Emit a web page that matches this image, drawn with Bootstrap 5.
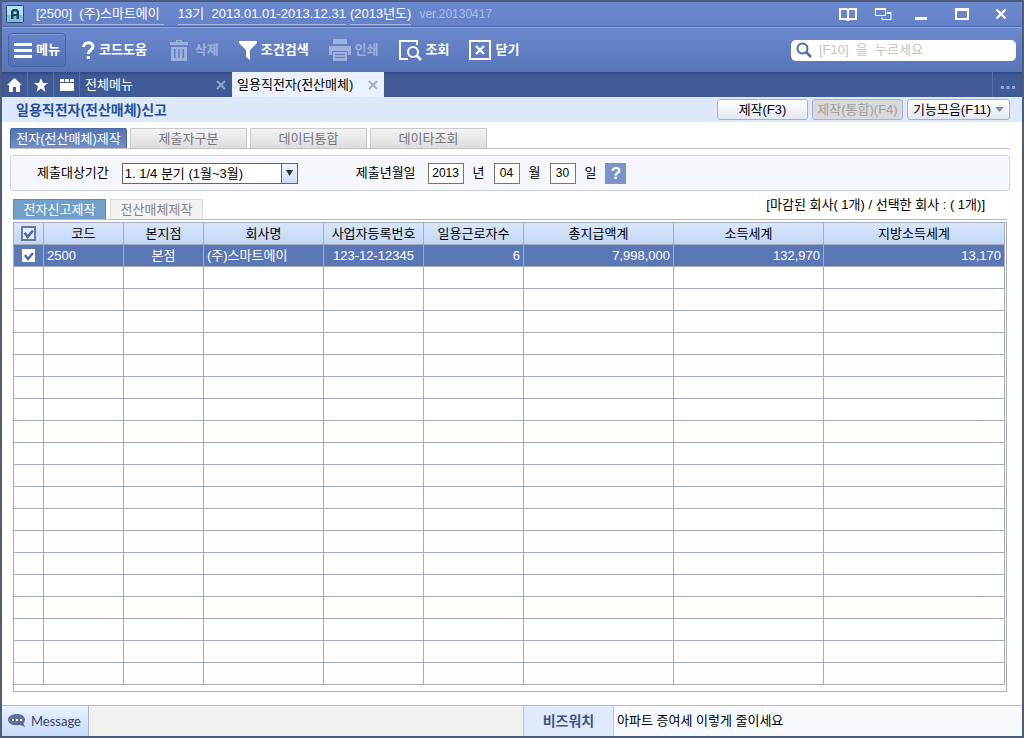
<!DOCTYPE html>
<html lang="ko">
<head>
<meta charset="utf-8">
<meta name="viewport" content="width=device-width, initial-scale=1">
<title>일용직전자(전산매체)신고</title>
<link rel="stylesheet" href="https://cdn.jsdelivr.net/npm/bootstrap@5.3.0/dist/css/bootstrap.min.css">
<style>
body{font:13px/20px "Liberation Sans","Noto Sans CJK KR",sans-serif;color:#000;background:#fff}
button,input,select{font:inherit;color:inherit}
a{color:inherit;text-decoration:none}
svg{display:block;flex:none}
.app-window{border:2px solid #4e5c7c}
.title-bar{height:25px;padding:0 15px 0 4px;background:linear-gradient(#6d89cf,#6480c6);border-bottom:1px solid #4d68ad;color:#fff}
.title-info{border-bottom:1px solid #a9b9e6;line-height:20px;white-space:pre}
.title-term{margin-left:14px}
.app-version{color:#afbde6;font-size:12px}
.icon-btn{border:0;padding:0;background:none;color:#fff;display:flex}
.win-controls{gap:18px}
.tool-bar{height:45px;padding:0 6px;background:linear-gradient(#6c88cd,#5875b9);border-top:1px solid #8fa5dd;color:#fff;font-weight:700}
.tool-list{gap:20px;margin-left:15px}
.tool-btn{border:0;padding:0;background:none;color:#fff;display:flex;align-items:center;gap:4px;white-space:nowrap;font-weight:700}
.tool-btn:disabled{color:#9db0de}
.menu-btn{height:34px;width:58px;padding:0 5px;border:1px solid #4763a8;border-radius:4px;background:linear-gradient(#6682c8,#5571b5);box-shadow:inset 0 1px #8199d6}
.search-box{width:225px;height:21px;padding:0 5px;gap:7px;border-radius:5px;background:#fff}
.search-box input{border:0;outline:0;padding:0;width:100%;min-width:0;height:20px;background:none;color:#333;font-weight:400}
.search-box input::placeholder{color:#c4c4c4;opacity:1}
.page-tabs{height:25px;background:#405a96;box-shadow:inset 0 2px 2px #33497d;color:#fff}
.tab-icon{width:26px;border:0;border-right:1px solid #5870a8;background:none;color:#fff;padding:0;display:flex;align-items:center;justify-content:center}
.page-tab{width:152px;padding:0 6px 0 5px}
.page-tab.is-open{background:#eaf1fc;color:#000}
.page-tab .icon-btn{color:#93a2cb}
.page-tab.is-open .icon-btn{color:#a7b0bd}
.more-btn{width:30px;border:0;border-left:1px solid #5870a8;background:none;padding:6px 0 0;display:flex;align-items:center;justify-content:center;color:#93a2cb}
.page-head{height:25px;padding:0 12px 0 14px;background:#dde9fb}
.page-head h1{font-size:14px;font-weight:700;line-height:20px;color:#1f4fa0}
.act-btn{height:21px;border:1px solid #a9b3c4;border-radius:3px;background:linear-gradient(#fff,#e3e7ef);padding:0;line-height:18px;white-space:nowrap}
.act-btn:disabled{color:#a0a0a0;background:#d9d9d9}
.act-make{width:91px}
.act-more{width:103px}
.main-area{padding:6px 12px 13px 8px}
.step-tabs{gap:3px;border-bottom:1px solid #c3c3c3}
.step-tab{width:117px;height:20px;border:1px solid #c9c9c9;border-bottom:0;border-radius:2px 2px 0 0;background:linear-gradient(#f4f4f4,#dcdcdc);color:#777;padding:0;line-height:17px;white-space:nowrap}
.step-tab.is-on{background:linear-gradient(#5674b0,#7090c6);border-color:#4a68a5;color:#fff}
.filter-box{height:36px;margin-top:6px;padding:0 26px;border:1px solid #c9d4e6;border-radius:3px;background:#f5f7fc}
.period-select{width:176px;height:21px;margin:0 58px 0 13px}
.period-select select{width:100%;height:100%;border:1px solid #666;border-radius:0;background:#fff;appearance:none;padding:0 20px 0 2px;line-height:17px}
.select-arrow{right:1px;top:1px;bottom:1px;width:16px;border-left:1px solid #666;background:linear-gradient(#f0f5fd,#cfdcf2);pointer-events:none}
.date-input{height:21px;border:1px solid #777;background:#fff;padding:0;text-align:center;font-size:12px}
.date-label{margin-right:12px}
.unit-label{margin:0 9px}
.w-year{width:36px}
.w-day{width:26px}
.help-btn{width:21px;height:21px;border:0;padding:0;background:#7b93cb;color:#fff;font-weight:700;font-size:17px;line-height:21px}
.sub-row{margin:7px 3px 2px;border-bottom:1px solid #b9bdc0}
.sub-tab{width:93px;height:20px;border:1px solid #d8d8d8;border-bottom:0;background:#f2f2f2;color:#858585;padding:0;line-height:17px}
.sub-tab.is-on{background:#73a0cb;border-color:#5d8bb8;color:#fff}
.count-note{padding:0 22px 7px 0;line-height:14px}
.grid-frame{margin:0 3px;border:1px solid #a7afbf;padding:0 1px 6px 0}
.data-grid{width:100%;table-layout:fixed;border-collapse:separate;border-spacing:0}
.data-grid th,.data-grid td{height:22px;padding:0 3px;border-right:1px solid #a3abc0;border-bottom:1px solid #a3abc0;line-height:20px;white-space:nowrap;overflow:hidden;font-weight:400}
.data-grid th{text-align:center;background:linear-gradient(#d9e6fa,#c3d7f4)}
.data-grid .picked td{background:#5b77b6;color:#fff}
.data-grid input{appearance:none;display:block;width:15px;height:15px;margin:0 auto;border:2px solid #68799a;background:#e4edfb}
.data-grid td input{width:13px;height:13px;border:0;background:#fff}
.data-grid input:checked{background-image:url("data:image/svg+xml,%3Csvg xmlns='http://www.w3.org/2000/svg' viewBox='0 0 12 12'%3E%3Cpath d='M2 5l3 4 5-6' fill='none' stroke='%234e6ba9' stroke-width='2.4'/%3E%3C/svg%3E");background-position:center;background-size:12px;background-repeat:no-repeat}
.status-bar{height:31px;border-top:1px solid #b7becb;background:#f6f9fe}
.msg-btn{width:87px;border:0;border-right:1px solid #a8b2c4;background:linear-gradient(#e9f1fd,#c8dcf8);color:#35456a;display:flex;align-items:center;gap:5px;padding:0 6px;font-family:Lato,sans-serif;font-size:13px}
.msg-area{background:#f0f0ee}
.news-name{width:91px;background:#dfebfc;border:1px solid #b9c6de;border-width:0 1px;color:#3f5687;font-size:14px;font-weight:700}
.news-area{width:408px;padding-left:3px}
</style>
</head>
<body>
<div class="app-window d-flex flex-column min-vh-100">
  <header>
    <div class="title-bar d-flex align-items-center">
      <svg width="18" height="18" viewBox="0 0 18 18"><rect x=".5" y=".5" width="17" height="17" rx="1" fill="#b4e2ec" stroke="#2b4a72"/><path d="M1 10h16v7H1z" fill="#7fbfd8"/><path d="M5 14V6l2-2h4l2 2v8h-2.500v-3h-3v3zM7.500 6.500v2.500h3V6.500z" fill="#1d4460" fill-rule="evenodd"/></svg>
      <span class="title-info ms-2 px-1">[2500]  (주)스마트에이</span>
      <span class="title-info title-term">13기  2013.01.01-2013.12.31</span>
      <span class="title-info ms-1">(2013년도)</span>
      <span class="app-version ms-2">ver.20130417</span>
      <div class="win-controls d-flex align-items-center ms-auto">
        <button class="icon-btn" aria-label="도움말"><svg width="18" height="14" viewBox="0 0 18 14" fill="none" stroke="currentColor" stroke-width="2"><path d="M1 2h6l2 1 2-1h6v10h-6l-2 1-2-1H1zM9 3v10"/></svg></button>
        <button class="icon-btn" aria-label="창 전환"><svg width="17" height="13" viewBox="0 0 17 13" fill="none" stroke="currentColor"><path d="M.5 .5h10v7H.5zM.5 1.500h10M12 5.500h4v6H7V9M12 4.500h4.500"/></svg></button>
        <button class="icon-btn ms-1" aria-label="최소화"><svg width="15" height="14" viewBox="0 0 15 14"><path d="M1 10h12v3H1z" fill="currentColor"/></svg></button>
        <button class="icon-btn ms-2" aria-label="최대화"><svg width="14" height="12" viewBox="0 0 14 12"><path d="M0 0h14v12H0zM2 3v7h10V3z" fill="currentColor" fill-rule="evenodd"/></svg></button>
        <button class="icon-btn ms-2" aria-label="창 닫기"><svg width="12" height="12" viewBox="0 0 12 12"><path d="M1.500 1.500l9 9M10.500 1.500l-9 9" stroke="currentColor" stroke-width="2.300"/></svg></button>
      </div>
    </div>
    <div class="tool-bar d-flex align-items-center">
      <button class="tool-btn menu-btn"><svg width="18" height="16" viewBox="0 0 18 16"><path d="M0 1h18v3H0zM0 7h18v3H0zM0 13h18v3H0z" fill="currentColor"/></svg>메뉴</button>
      <div class="tool-list d-flex align-items-center">
        <button class="tool-btn"><svg width="14" height="19" viewBox="0 0 14 19"><path d="M2.500 6C2.500 .5 12 .5 12 5.500c0 3.500-4.700 3.500-4.700 7.500" fill="none" stroke="currentColor" stroke-width="3"/><path d="M5.800 15h3v3h-3z" fill="currentColor"/></svg>코드도움</button>
        <button class="tool-btn" disabled><svg width="24" height="21" viewBox="-3 0 24 21"><path d="M0 2h6V0h6v2h6v3H0zM7.500 1V2h3V1zM1 7h16v14H1zM4 9v9h1.500V9zM8.200 9v9h1.500V9zM12.500 9v9H14V9z" fill="currentColor" fill-rule="evenodd"/></svg>삭제</button>
        <button class="tool-btn"><svg width="18" height="19" viewBox="0 0 18 19"><path d="M0 0h18v2l-7 7v10l-4-3V9L0 2z" fill="currentColor"/></svg>조건검색</button>
        <button class="tool-btn" disabled><svg width="22" height="22" viewBox="0 0 22 22"><path d="M4 0h14v5H4zM0 7h22v9h-3v-4H3v4H0zM4 13h14v9H4zM6 15v1h10v-1zM6 18v1h10v-1z" fill="currentColor" fill-rule="evenodd"/></svg>인쇄</button>
        <button class="tool-btn"><svg width="23" height="21" viewBox="0 0 23 21" fill="none" stroke="currentColor"><path d="M18 5V1H1v18h8" stroke-width="2"/><circle cx="14" cy="12" r="5" stroke-width="2"/><path d="M17.500 15.500l4.500 4.500" stroke-width="2.500"/></svg>조회</button>
        <button class="tool-btn"><svg width="22" height="20" viewBox="0 0 22 20" fill="none" stroke="currentColor"><path d="M1 1h20v18H1z" stroke-width="2"/><path d="M7 6l8 8M15 6l-8 8" stroke-width="2.300"/></svg>닫기</button>
      </div>
      <label class="search-box d-flex align-items-center ms-auto">
        <svg width="16" height="16" viewBox="0 0 16 16" fill="none" stroke="#4c6aa6"><circle cx="6.500" cy="6.500" r="5" stroke-width="2"/><path d="M10 10l5 5" stroke-width="2.500"/></svg>
        <input type="search" placeholder="[F10]  을  누르세요" aria-label="검색">
      </label>
    </div>
    <nav class="page-tabs d-flex align-items-stretch">
      <button class="tab-icon" aria-label="홈"><svg width="15" height="14" viewBox="0 0 15 14"><path d="M7.500 0L0 7h2v7h4V9h3v5h4V7h2z" fill="currentColor"/></svg></button>
      <button class="tab-icon" aria-label="즐겨찾기"><svg width="14" height="14" viewBox="0 0 14 14"><path d="M7 0l2 5h5l-4 3.200L11.500 14 7 10.500 2.500 14 4 8.200 0 5h5z" fill="currentColor"/></svg></button>
      <button class="tab-icon" aria-label="일정"><svg width="14" height="13" viewBox="0 0 14 13"><path d="M0 1h4v3H0zM5 1h4v3H5zM10 1h4v3h-4zM0 5h14v8H0z" fill="currentColor"/></svg></button>
      <div class="page-tab d-flex align-items-center justify-content-between"><a href="#">전체메뉴</a><button class="icon-btn" aria-label="전체메뉴 닫기"><svg width="10" height="10" viewBox="0 0 10 10"><path d="M1 1l8 8M9 1L1 9" stroke="currentColor" stroke-width="2"/></svg></button></div>
      <div class="page-tab is-open d-flex align-items-center justify-content-between"><a href="#">일용직전자(전산매체)</a><button class="icon-btn" aria-label="탭 닫기"><svg width="10" height="10" viewBox="0 0 10 10"><path d="M1 1l8 8M9 1L1 9" stroke="currentColor" stroke-width="2"/></svg></button></div>
      <button class="more-btn ms-auto" aria-label="더 보기"><svg width="14" height="3" viewBox="0 0 14 3"><path d="M0 0h3v3H0zM5.500 0h3v3h-3zM11 0h3v3h-3z" fill="currentColor"/></svg></button>
    </nav>
  </header>
  <div class="page-head d-flex align-items-center">
    <h1 class="m-0">일용직전자(전산매체)신고</h1>
    <div class="d-flex gap-1 ms-auto">
      <button class="act-btn act-make">제작(F3)</button>
      <button class="act-btn act-make" disabled>제작(통합)(F4)</button>
      <button class="act-btn act-more d-flex align-items-center justify-content-center gap-1">기능모음(F11)<svg width="9" height="5" viewBox="0 0 9 5"><path d="M0 0h9L4.500 5z" fill="#8d939e"/></svg></button>
    </div>
  </div>
  <main class="main-area flex-grow-1">
    <div class="step-tabs d-flex">
      <button class="step-tab is-on">전자(전산매체)제작</button>
      <button class="step-tab">제출자구분</button>
      <button class="step-tab">데이터통합</button>
      <button class="step-tab">데이타조회</button>
    </div>
    <form class="filter-box d-flex align-items-center">
      <label for="period">제출대상기간</label>
      <div class="period-select position-relative">
        <select id="period"><option>1. 1/4 분기 (1월~3월)</option></select>
        <span class="select-arrow position-absolute d-flex align-items-center justify-content-center"><svg width="7" height="6" viewBox="0 0 7 6"><path d="M0 0h7L3.500 6z" fill="#333"/></svg></span>
      </div>
      <label for="year" class="date-label">제출년월일</label>
      <input id="year" class="date-input w-year" value="2013">
      <label for="year" class="unit-label">년</label>
      <input id="month" class="date-input w-day" value="04">
      <label for="month" class="unit-label">월</label>
      <input id="day" class="date-input w-day" value="30">
      <label for="day" class="unit-label">일</label>
      <button type="button" class="help-btn" aria-label="도움말">?</button>
    </form>
    <div class="sub-row d-flex align-items-end">
      <button class="sub-tab is-on">전자신고제작</button>
      <button class="sub-tab ms-1">전산매체제작</button>
      <span class="count-note ms-auto">[마감된 회사( 1개) / 선택한 회사 : ( 1개)]</span>
    </div>
    <div class="grid-frame">
      <table class="data-grid">
        <colgroup><col width="30"><col width="80"><col width="80"><col width="120"><col width="100"><col width="100"><col width="150"><col width="150"><col></colgroup>
        <thead><tr><th><input type="checkbox" checked aria-label="전체 선택"></th><th>코드</th><th>본지점</th><th>회사명</th><th>사업자등록번호</th><th>일용근로자수</th><th>총지급액계</th><th>소득세계</th><th>지방소득세계</th></tr></thead>
        <tbody id="companies">
          <tr class="picked"><td><input type="checkbox" checked aria-label="스마트에이 선택"></td><td>2500</td><td class="text-center">본점</td><td>(주)스마트에이</td><td class="text-center">123-12-12345</td><td class="text-end">6</td><td class="text-end">7,998,000</td><td class="text-end">132,970</td><td class="text-end">13,170</td></tr>
        </tbody>
      </table>
    </div>
  </main>
  <footer class="status-bar d-flex align-items-stretch">
    <button class="msg-btn"><svg width="18" height="14" viewBox="0 0 18 14"><path d="M9 0c5 0 8 2.500 8 5.500 0 1.500-.5 2.500-1.500 3.500l1.500 4-5-2C5 12 0 10 0 5.500 0 2.500 4 0 9 0z" fill="#5f7199"/><path d="M4 5h2v2H4zM8 5h2v2H8zM12 5h2v2h-2z" fill="#fff"/></svg>Message</button>
    <div class="msg-area flex-grow-1"></div>
    <div class="news-name d-flex align-items-center justify-content-center">비즈워치</div>
    <a href="#" class="news-area d-flex align-items-center">아파트 증여세 이렇게 줄이세요</a>
  </footer>
</div>
<script src="https://cdn.jsdelivr.net/npm/bootstrap@5.3.0/dist/js/bootstrap.bundle.min.js"></script>
<script>
// Fill the rest of the grid with blank rows
const companies = document.getElementById('companies');
for (let i = 0; i < 19; i++) {
  const row = companies.insertRow();
  for (let c = 0; c < 9; c++) row.insertCell();
}
</script>
</body>
</html>
